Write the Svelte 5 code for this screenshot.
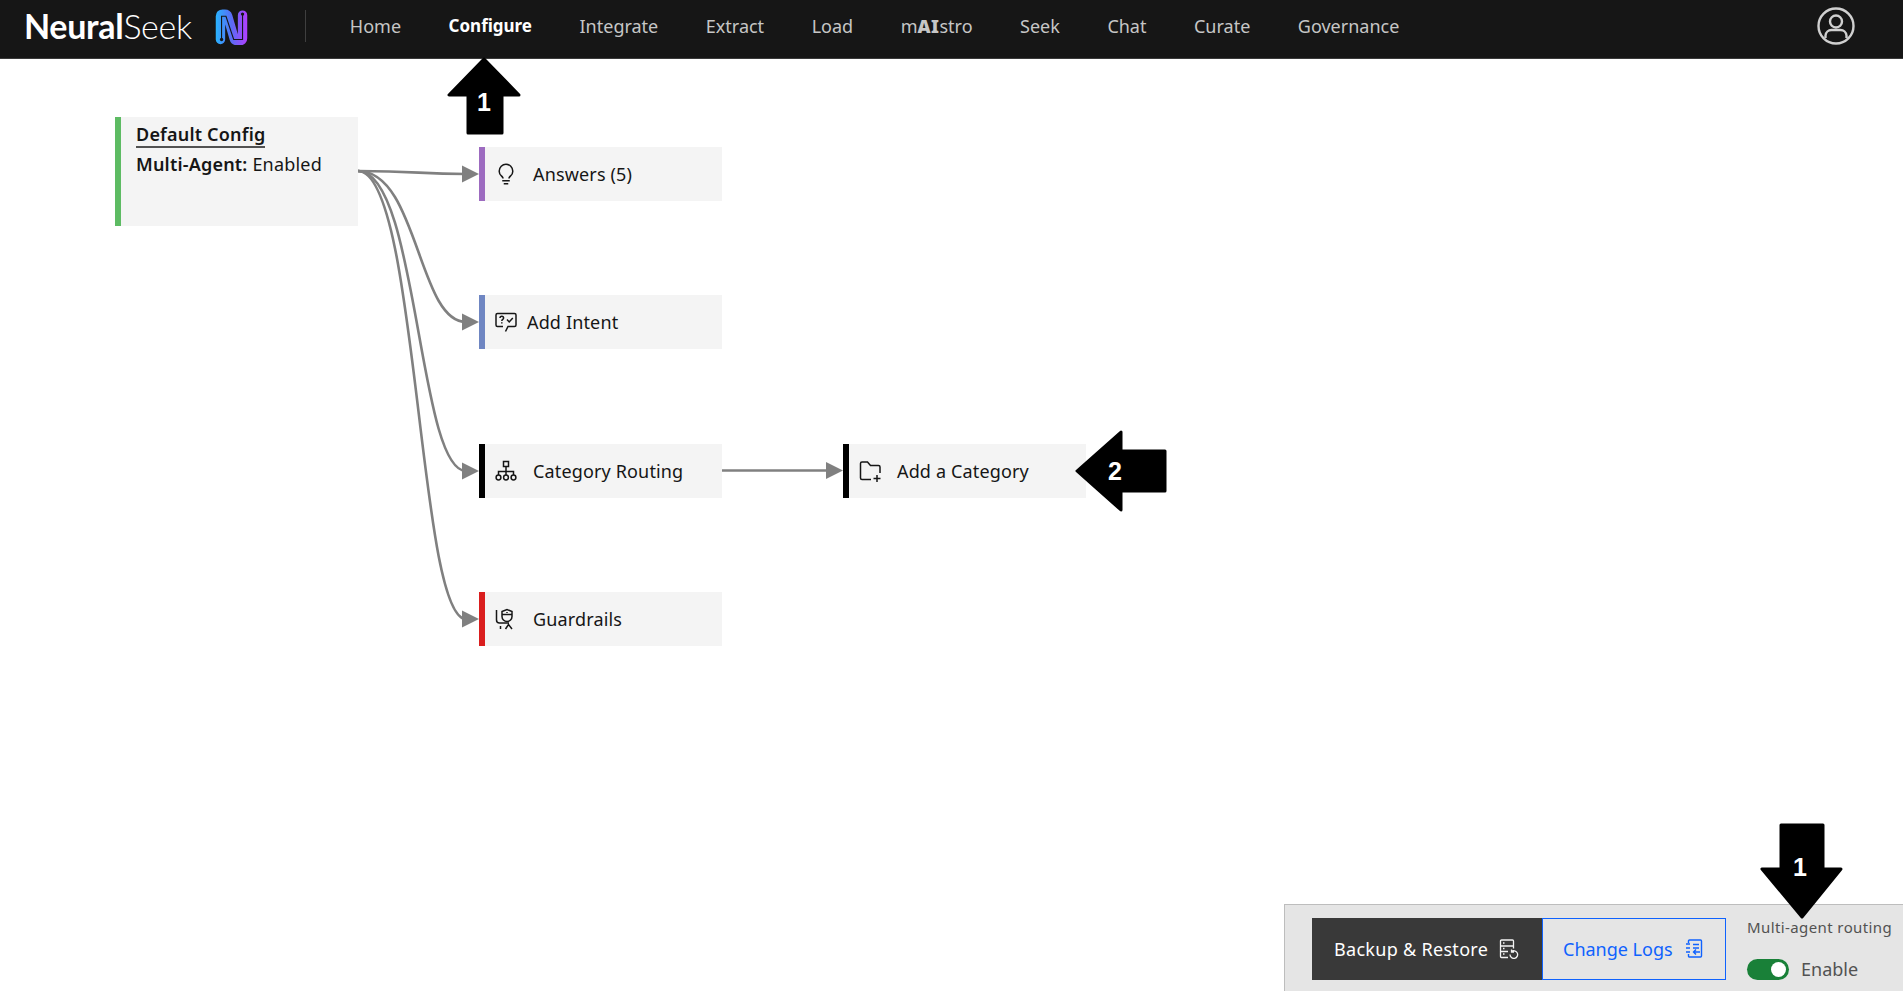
<script>
  const navItems = ['Home', 'Configure', 'Integrate', 'Extract', 'Load', 'mAIstro', 'Seek', 'Chat', 'Curate', 'Governance'];
  const nodes = [
    { id: 'answers', label: 'Answers (5)', x: 479, y: 147, color: '#9d6bc0', gap: 15 },
    { id: 'intent', label: 'Add Intent', x: 479, y: 295, color: '#6f86c2', gap: 9 },
    { id: 'routing', label: 'Category Routing', x: 479, y: 444, color: '#000', gap: 15 },
    { id: 'guard', label: 'Guardrails', x: 479, y: 592, color: '#da1e1e', gap: 15 },
    { id: 'folder', label: 'Add a Category', x: 843, y: 444, color: '#000', gap: 15 }
  ];
  const edges = [
    'M358 171 C418 171 418 174 466 174',
    'M358 171 C418 171 418 322 466 322',
    'M358 171 C418 171 418 471 466 471',
    'M358 171 C418 171 418 619 466 619',
    'M722 470.5 L830 470.5'
  ];
  const heads = [[479, 174], [479, 322], [479, 471], [479, 619], [843, 470.5]];
</script>

<div class="page">
  <header class="topbar">
    <div class="logo">
      <span class="wordmark"><b>Neural</b><i>Seek</i></span>
      <svg class="mark" viewBox="1.5 0.5 29 33.5" width="33" height="37" aria-hidden="true">
        <defs>
          <linearGradient id="ng" gradientUnits="userSpaceOnUse" x1="1" y1="0" x2="31" y2="0">
            <stop offset="0" stop-color="#25b7ff" />
            <stop offset="0.5" stop-color="#5a6cf5" />
            <stop offset="1" stop-color="#b63cff" />
          </linearGradient>
        </defs>
        <path d="M6 29V8q0-2 2-2h2q2 0 2.600 2l5.800 20q.6 2 2.600 2h3q2 0 2-2V7" fill="none" stroke="url(#ng)" stroke-width="8.500" stroke-linecap="round" stroke-linejoin="round" />
        <path d="M7 29V8h4l7 21h8V6" fill="none" stroke="#161616" stroke-width="1" />
        <circle cx="7" cy="29" r="1.500" fill="#161616" />
        <circle cx="26" cy="6" r="1.500" fill="#161616" />
      </svg>
    </div>
    <span class="divider"></span>
    <nav class="nav">
      {#each navItems as item}
        {#if item === 'mAIstro'}
          <a class="navlink maistro" href="#top">m<b>AI</b>stro</a>
        {:else}
          <a class="navlink" class:active={item === 'Configure'} href="#top">{item}</a>
        {/if}
      {/each}
    </nav>
    <svg class="avatar" viewBox="0 0 38 38" width="38" height="38" fill="none" stroke="#d0d0d0" stroke-width="2.400" aria-hidden="true">
      <circle cx="19" cy="19" r="17.500" />
      <circle cx="19" cy="14.500" r="6" />
      <path d="M8.500 31v-2.500a6 6 0 0 1 6-5.500h9a6 6 0 0 1 6 5.500V31" />
    </svg>
  </header>

  <main class="canvas">
    <svg class="edges" width="1903" height="991" aria-hidden="true">
      {#each edges as d}
        <path {d} fill="none" stroke="#808080" stroke-width="2.600" />
      {/each}
      {#each heads as [x, y]}
        <polygon points="{x},{y} {x - 17},{y - 8.500} {x - 17},{y + 8.500}" fill="#808080" />
      {/each}
    </svg>

    <div class="node root">
      <div class="root-title">Default Config</div>
      <div class="root-line"><strong>Multi-Agent:</strong> Enabled</div>
    </div>

    {#each nodes as n}
      <div class="node step" style="left:{n.x}px;top:{n.y}px;border-left-color:{n.color};column-gap:{n.gap}px">
        {#if n.id === 'answers'}
          <svg viewBox="0 0 32 32" width="24" height="24" fill="#161616" aria-hidden="true"><path d="M11 24h10v2H11zM13 28h6v2h-6zM16 2A10 10 0 0 0 6 12a9.190 9.190 0 0 0 3.460 7.620c1 .93 1.540 1.460 1.540 2.380h2c0-1.840-1.110-2.870-2.190-3.860A7.200 7.200 0 0 1 8 12a8 8 0 0 1 16 0 7.200 7.200 0 0 1-2.820 6.140c-1.070 1-2.180 2-2.180 3.860h2c0-.92.530-1.450 1.540-2.390A9.180 9.180 0 0 0 26 12 10 10 0 0 0 16 2z" /></svg>
        {:else if n.id === 'intent'}
          <svg viewBox="0 0 24 24" width="24" height="24" fill="none" stroke="#161616" stroke-width="1.500" aria-hidden="true"><path d="M3.500 3.500h17a1.500 1.500 0 0 1 1.500 1.500v10a1.500 1.500 0 0 1-1.500 1.500h-6.500l-2.500 5M9 16.500H3.500A1.500 1.500 0 0 1 2 15V5a1.500 1.500 0 0 1 1.500-1.500" /><path d="M6 8a1.800 1.800 0 0 1 3.600 0c0 1.400-1.800 1.500-1.800 3M7.800 12.300v1.300M13 9.500l2.200 2.400 3.600-4" /></svg>
        {:else if n.id === 'routing'}
          <svg viewBox="0 0 24 24" width="24" height="24" fill="none" stroke="#161616" stroke-width="1.500" aria-hidden="true"><rect x="9.500" y="2.500" width="5" height="5" /><path d="M12 7.500V16M4.500 16v-3.500h15V16" /><circle cx="4.500" cy="18.500" r="2.400" /><circle cx="12" cy="18.500" r="2.400" /><circle cx="19.500" cy="18.500" r="2.400" /></svg>
        {:else if n.id === 'guard'}
          <svg viewBox="0 0 24 24" width="24" height="24" fill="none" stroke="#161616" stroke-width="1.500" aria-hidden="true"><path d="M2.500 3v10a3 3 0 0 0 3 3h9.500M6.500 22v-3M18 22l-3.500-4.500L11.500 22" /><path d="M8 4.500 13 2.500l5 2v5a5 5 0 0 1-10 0z" /><path d="M8 7.500h10M13 5v1" /></svg>
        {:else}
          <svg viewBox="0 0 24 24" width="24" height="24" fill="none" stroke="#161616" stroke-width="1.500" aria-hidden="true"><path d="M13 20.500H4A1.500 1.500 0 0 1 2.500 19V4.500A1.500 1.500 0 0 1 4 3h5.500l3 3.500h8A1.500 1.500 0 0 1 22 8v6" /><path d="M19 16v7M15.500 19.500h7" /></svg>
        {/if}
        <span>{n.label}</span>
      </div>
    {/each}
  </main>

  <footer class="panel">
    <div class="buttons">
      <button class="btn primary">Backup &amp; Restore
        <svg viewBox="0 0 20 20" width="20" height="20" fill="none" stroke="#f4f4f4" stroke-width="1.300" aria-hidden="true"><path d="M9 18.500H2.500a1 1 0 0 1-1-1V2a1 1 0 0 1 1-1h11a1 1 0 0 1 1 1v7.500M1.500 7h13M1.500 12.500H9" /><path d="M4 4h1.500M4 9.500h1.500M4 15h1.500" /><path d="M11 15.500a3.800 3.800 0 1 0 1.200-2.700M12.500 10.500v2.500h2.500" /></svg>
      </button>
      <button class="btn outline">Change Logs
        <svg viewBox="0 0 18 20" width="18" height="20" fill="none" stroke="#0f62fe" stroke-width="1.400" aria-hidden="true"><path d="M3.500 4V2a1 1 0 0 1 1-1h11a1 1 0 0 1 1 1v15a1 1 0 0 1-1 1h-11a1 1 0 0 1-1-1v-2" /><path d="M1 5h4M1 9h4M1 13h4M8 5.500h6M8 9h6M15 13H8.500M11 10.500 8.500 13l2.500 2.500" /></svg>
      </button>
    </div>
    <div class="routing">
      <span class="routing-label">Multi-agent routing</span>
      <div class="toggle-row">
        <span class="toggle"><span class="knob"></span></span>
        <span class="toggle-text">Enable</span>
      </div>
    </div>
  </footer>

  <svg class="annotations" width="1903" height="991" aria-hidden="true">
    <g fill="#000" stroke="#000" stroke-width="3" stroke-linejoin="round">
      <polygon points="484,59 449,95 468,95 468,133 502,133 502,95 519,95" />
      <polygon points="1077,471 1121,432 1121,451 1165,451 1165,491 1121,491 1121,510" />
      <polygon points="1802,917 1762,869 1781,869 1781,825 1823,825 1823,869 1841,869" />
    </g>
    <g class="marks">
      <text x="484" y="111">1</text>
      <text x="1115" y="480">2</text>
      <text x="1800" y="876">1</text>
    </g>
  </svg>
</div>

<style>
  :global(body) {
    margin: 0;
    background: #fff;
  }
  .page {
    position: relative;
    width: 1903px;
    height: 991px;
    overflow: hidden;
    font-family: "Noto Sans", "Liberation Sans", sans-serif;
    color: #161616;
  }
  .topbar {
    position: relative;
    z-index: 1;
    display: flex;
    align-items: center;
    box-sizing: border-box;
    height: 59px;
    padding: 0 48px 6px 24px;
    background: #161616;
    border-bottom: 1px solid #3a3a3a;
  }
  .logo {
    display: flex;
    align-items: center;
    gap: 23px;
  }
  .wordmark {
    font-family: Lato, sans-serif;
    font-size: 34px;
    line-height: 1;
    color: #fff;
    letter-spacing: -0.3px;
  }
  .wordmark b {
    font-weight: 700;
  }
  .wordmark i {
    font-style: normal;
    font-weight: 300;
  }
  .mark {
    display: block;
  }
  .divider {
    width: 1px;
    height: 32px;
    margin: 0 44px 0 57px;
    background: #3f3f3f;
  }
  .nav {
    display: flex;
    align-items: center;
    gap: 47.5px;
    flex: 1;
  }
  .navlink {
    color: #c6c6c6;
    font-size: 18px;
    text-decoration: none;
    line-height: 24px;
  }
  .navlink.active {
    color: #fff;
    font-size: 17px;
    font-weight: 700;
  }
  .maistro b {
    font-weight: 900;
    letter-spacing: 0.5px;
  }
  .canvas {
    position: absolute;
    inset: 0;
  }
  .edges,
  .annotations {
    position: absolute;
    left: 0;
    top: 0;
    z-index: 2;
    pointer-events: none;
  }
  .edges {
    z-index: 0;
  }
  .node {
    position: absolute;
    box-sizing: border-box;
    background: #f4f4f4;
    border-left: 6px solid #000;
  }
  .root {
    left: 115px;
    top: 117px;
    width: 243px;
    height: 109px;
    padding: 6px 15px;
    border-left-color: #5dbb63;
    font-size: 18px;
    letter-spacing: 0.2px;
    line-height: 24px;
  }
  .root-title {
    display: table;
    font-weight: 600;
    line-height: 23px;
    border-bottom: 2px solid #525252;
  }
  .root-line {
    margin-top: 4px;
  }
  .root-line strong {
    font-weight: 600;
  }
  .step {
    display: flex;
    align-items: center;
    width: 243px;
    height: 54px;
    padding-left: 9px;
    font-size: 18px;
    letter-spacing: 0.15px;
  }
  .step svg {
    flex: none;
  }
  .panel {
    position: absolute;
    left: 1284px;
    right: 0;
    bottom: 0;
    height: 87px;
    box-sizing: border-box;
    display: flex;
    gap: 21px;
    padding: 13px 0 0 27px;
    background: #e5e5e5;
    border: 1px solid #bdbdbd;
    border-width: 1px 0 0 1px;
  }
  .buttons {
    display: flex;
    height: 62px;
  }
  .btn {
    display: flex;
    align-items: center;
    box-sizing: border-box;
    height: 62px;
    font: inherit;
    font-size: 18px;
    letter-spacing: 0.3px;
    border: 0;
    padding: 0;
  }
  .primary {
    width: 230px;
    gap: 11px;
    padding-left: 22px;
    background: #393939;
    color: #fff;
  }
  .outline {
    width: 184px;
    gap: 12px;
    padding-left: 20px;
    letter-spacing: 0;
    background: transparent;
    color: #0f62fe;
    border: 1px solid #0f62fe;
  }
  .routing {
    display: flex;
    flex-direction: column;
  }
  .routing-label {
    font-size: 15px;
    line-height: 18px;
    color: #525252;
    letter-spacing: 0.4px;
    white-space: nowrap;
  }
  .toggle-row {
    display: flex;
    align-items: center;
    gap: 12px;
    margin-top: 21px;
  }
  .toggle {
    position: relative;
    width: 42px;
    height: 21px;
    border-radius: 11px;
    background: #198038;
  }
  .knob {
    position: absolute;
    right: 3px;
    top: 3px;
    width: 15px;
    height: 15px;
    border-radius: 50%;
    background: #fff;
  }
  .toggle-text {
    font-size: 18px;
    line-height: 24px;
    color: #525252;
  }
  .marks text {
    font-family: "Liberation Sans", Arial, sans-serif;
    font-weight: 700;
    font-size: 25px;
    fill: #fff;
    text-anchor: middle;
  }
</style>
